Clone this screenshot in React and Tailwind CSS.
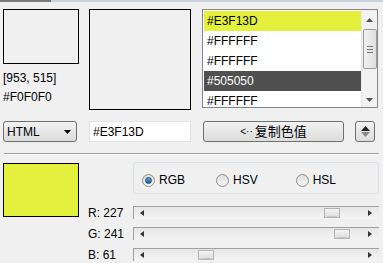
import React from "react";

const font = { fontFamily: '"Liberation Sans", "Noto Sans CJK SC", sans-serif' };

function Slider({ value }) {
  const left = 151 + (value / 255) * 193 - 133;
  return (
    <div className="relative w-[246px] h-[13px] border-t border-l border-[#a0a0a0] bg-gradient-to-b from-[#e6e6e6] to-[#f4f4f4]">
      <svg className="absolute left-[6px] top-[3px]" width="4" height="6" viewBox="0 0 4 6"><path d="M4 0 L0 3 L4 6Z" fill="#333" /></svg>
      <svg className="absolute right-[7px] top-[3px]" width="4" height="6" viewBox="0 0 4 6"><path d="M0 0 L4 3 L0 6Z" fill="#333" /></svg>
      <div
        className="absolute top-[1px] h-[10px] w-[16px] border border-[#b5b5b5] bg-gradient-to-b from-[#f4f4f4] to-[#dcdcdc]"
        style={{ left: left + "px" }}
      >
        <div className="absolute bottom-0 left-[2px] right-[2px] h-px bg-[#c8c8c8]" />
      </div>
    </div>
  );
}

function Radio({ checked, label, className }) {
  return (
    <div className={"flex items-center gap-[4px] " + (className || "")}>
      <div className="w-[13px] h-[13px] rounded-full border border-[#8e8f8f] bg-gradient-to-b from-[#dcdcdc] to-[#f6f6f6] flex items-center justify-center">
        {checked && <div className="w-[7px] h-[7px] rounded-full bg-gradient-to-b from-[#5fa6d8] to-[#1d5f94] border border-[#1a4d78]" />}
      </div>
      <span className="text-[12px] text-black">{label}</span>
    </div>
  );
}

export default function App() {
  const items = [
    { t: "#E3F13D", bg: "bg-[#e3f13d]", fg: "text-black" },
    { t: "#FFFFFF", bg: "bg-white", fg: "text-black" },
    { t: "#FFFFFF", bg: "bg-white", fg: "text-black" },
    { t: "#505050", bg: "bg-[#505050]", fg: "text-white" },
    { t: "#FFFFFF", bg: "bg-white", fg: "text-black" },
  ];
  return (
    <div className="w-[383px] h-[263px] bg-[#f0f0f0] overflow-hidden relative text-black" style={font}>
      <div className="flex h-[2px]">
        <div className="w-[51px] bg-[#7a7a7a]" />
        <div className="flex-1 bg-[#c9d3dd]" />
      </div>
      {/* Row 1 */}
      <div className="flex mt-[7px] pl-[3px]">
        <div className="w-[76px] flex flex-col">
          <div className="h-[55px] border border-black bg-[#f0f0f0]" />
          <div className="text-[12px] mt-[7px] leading-[14px]">[953, 515]</div>
          <div className="text-[12px] mt-[5px] leading-[14px]">#F0F0F0</div>
        </div>
        <div className="ml-[10px] w-[102px] h-[101px] border border-black bg-[#f0f0f0]" />
        <div className="ml-[11px] w-[176px] h-[99px] border border-[#828790] bg-white flex">
          <div className="flex-1 flex flex-col pt-[1px] pl-px overflow-hidden">
            {items.map((it, i) => (
              <div key={i} className={"h-[20px] shrink-0 flex items-center pl-[3px] text-[12px] " + it.bg + " " + it.fg}>{it.t}</div>
            ))}
          </div>
          <div className="w-[16px] bg-[#f2f2f2] relative border-l border-[#e8e8e8]">
            <svg className="absolute left-[4px] top-[8px]" width="7" height="4" viewBox="0 0 7 4"><path d="M0 4 L3.5 0 L7 4Z" fill="#555" /></svg>
            <div className="absolute left-px top-[19px] w-[14px] h-[40px] rounded-[2px] border border-[#9a9a9a] bg-gradient-to-r from-[#f2f2f2] to-[#dedede] flex flex-col items-center justify-center gap-[2px]">
              <div className="w-[6px] h-px bg-[#777]" />
              <div className="w-[6px] h-px bg-[#777]" />
              <div className="w-[6px] h-px bg-[#777]" />
            </div>
            <svg className="absolute left-[4px] top-[88px]" width="7" height="4" viewBox="0 0 7 4"><path d="M0 0 L3.5 4 L7 0Z" fill="#555" /></svg>
          </div>
        </div>
      </div>
      {/* Row 2 */}
      <div className="flex mt-[11px] pl-[3px] items-start">
        <div className="w-[74px] h-[21px] rounded-[3px] border border-[#707070] bg-gradient-to-b from-[#f2f2f2] to-[#dcdcdc] flex items-center pl-[3px] pr-[5px] justify-between">
          <span className="text-[12px]">HTML</span>
          <svg width="7" height="4" viewBox="0 0 7 4"><path d="M0 0 L3.5 4 L7 0Z" fill="#000" /></svg>
        </div>
        <div className="ml-[12px] w-[102px] h-[21px] bg-white border border-[#e2e3ea] flex items-center pl-[3px] text-[12px]">#E3F13D</div>
        <div className="ml-[12px] w-[141px] h-[21px] rounded-[3px] border border-[#707070] bg-gradient-to-b from-[#f2f2f2] to-[#dcdcdc] flex items-center justify-center text-[13px]">
          <span className="text-[10px] mr-[2px]">&lt;··</span>复制色值
        </div>
        <div className="ml-[11px] w-[20px] h-[21px] rounded-[3px] border border-[#707070] bg-gradient-to-b from-[#f2f2f2] to-[#dcdcdc] flex flex-col items-center justify-center gap-[1px]">
          <svg width="9" height="5" viewBox="0 0 9 5"><path d="M0 5 L4.5 0 L9 5Z" fill="#222" /></svg>
          <svg width="9" height="5" viewBox="0 0 9 5"><path d="M0 0 L4.5 5 L9 0Z" fill="#888" /></svg>
        </div>
      </div>
      {/* separator */}
      <div className="mx-[4px] mt-[11px] h-[2px] border-t border-[#a0a0a0] border-b border-b-white" />
      {/* Row 3 */}
      <div className="flex mt-[7px] pl-[3px]">
        <div className="w-[76px] h-[54px] border border-black bg-[#e3f13d] mt-px" />
        <div className="ml-[54px] w-[246px] h-[32px] rounded-[3px] border border-[#d5dfe5] flex items-end pb-[4px]">
          <Radio checked label="RGB" className="ml-[8px]" />
          <Radio label="HSV" className="ml-[31px]" />
          <Radio label="HSL" className="ml-[38px]" />
        </div>
      </div>
      <div className="flex flex-col gap-[8px] mt-[-11px]">
        {[["R: 227", 227], ["G: 241", 241], ["B: 61", 61]].map(([l, v]) => (
          <div key={l} className="flex items-center pl-[88px] h-[13px]">
            <span className="w-[45px] text-[12px]">{l}</span>
            <Slider value={v} />
          </div>
        ))}
      </div>
    </div>
  );
}
